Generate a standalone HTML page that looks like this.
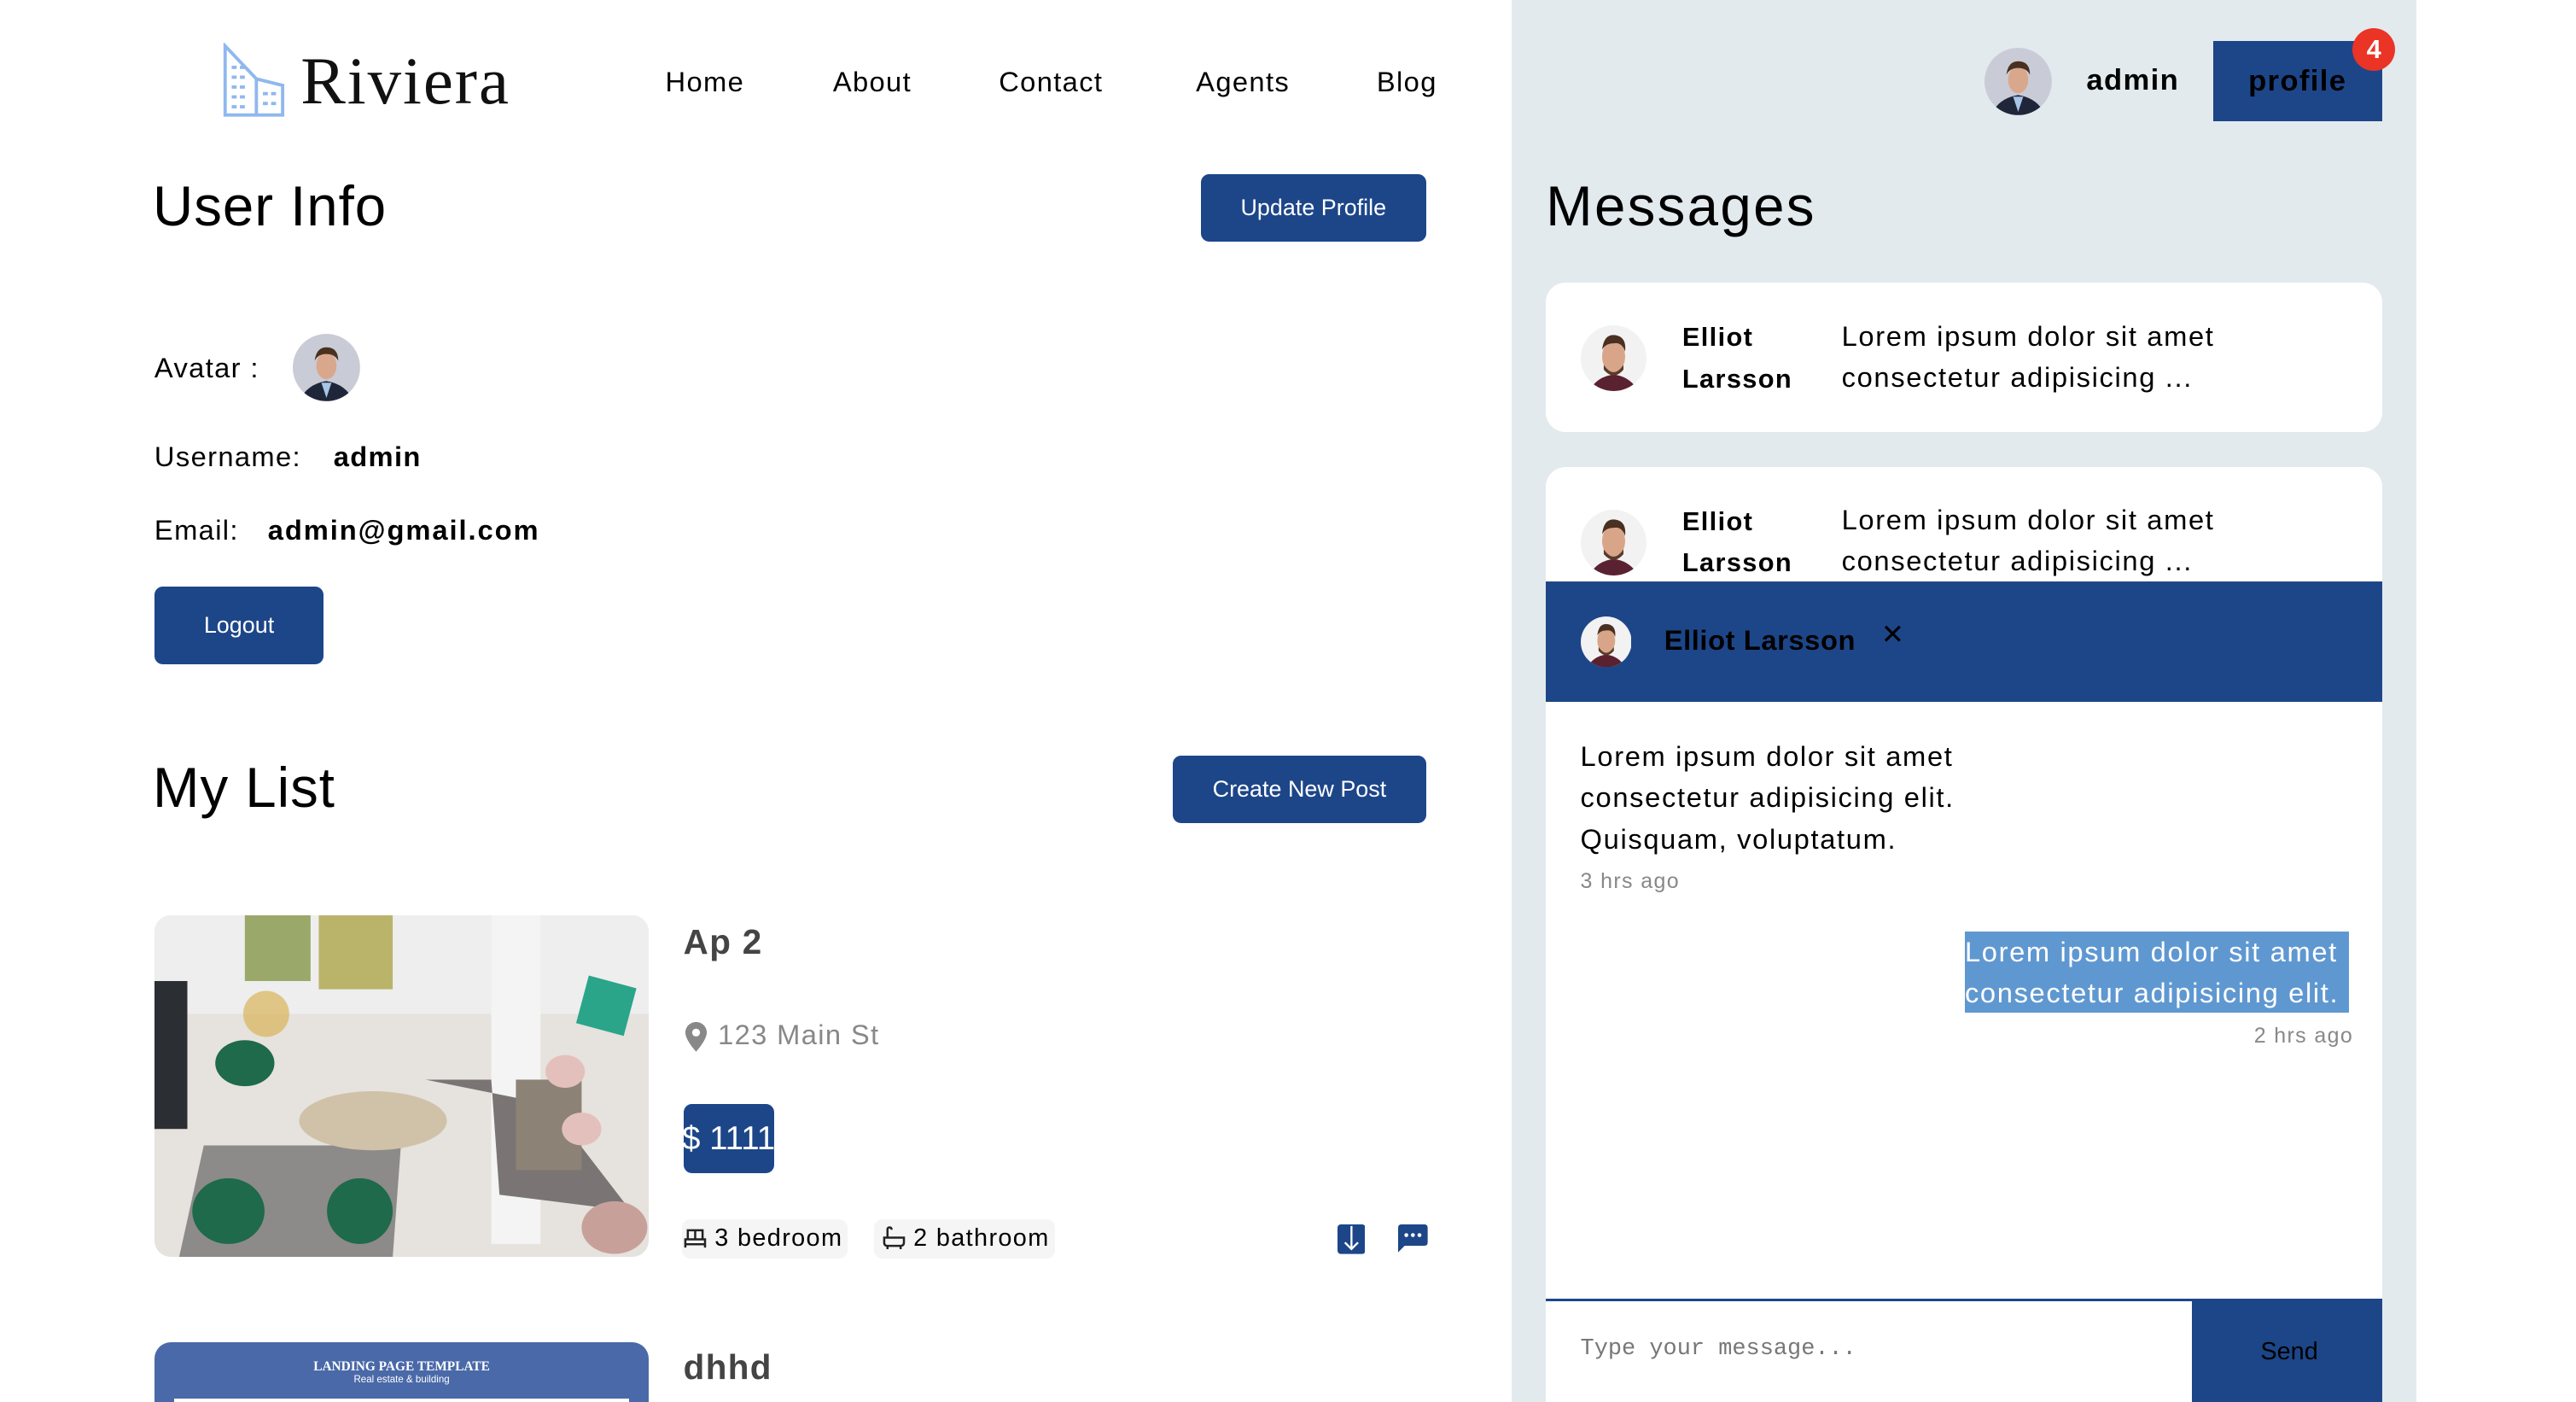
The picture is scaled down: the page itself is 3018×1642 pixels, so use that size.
<!DOCTYPE html>
<html><head><meta charset="utf-8"><style>
html,body{margin:0;padding:0;background:#fff;overflow:hidden;width:3018px;height:1642px}
#w{zoom:1.9247;width:1568px;height:853px;position:relative;font-family:"Liberation Sans",sans-serif;color:#000;letter-spacing:0.7px}
.a{position:absolute;white-space:nowrap}
.btn{position:absolute;background:#1d4689;color:#fff;border-radius:5px;font-size:14px;display:flex;align-items:center;justify-content:center;white-space:nowrap;letter-spacing:0}
.card{position:absolute;left:941px;width:509px;background:#fff;border-radius:12px}
.nm{font-weight:bold;font-size:16px;line-height:25px}
.ms{font-size:17px;line-height:25px;letter-spacing:0.85px}
h1{margin:0;font-weight:normal;font-size:34px;letter-spacing:0.5px}
</style></head><body><div id="w">
<div class="a" style="left:920px;top:0;width:551px;height:853px;background:#e2eaee"></div>

<svg class="a" style="left:134px;top:26px" width="42" height="46" viewBox="0 0 42 46"><path d="M3 2 L3 44 L38 44 L38 26 L22 22 Z" fill="none" stroke="#8fb8ee" stroke-width="2"/><path d="M22 22 L22 44" stroke="#8fb8ee" stroke-width="2"/><g fill="#8fb8ee"><rect x="7" y="14" width="3" height="2"/><rect x="12" y="14" width="3" height="2"/><rect x="7" y="20" width="3" height="2"/><rect x="12" y="20" width="3" height="2"/><rect x="7" y="26" width="3" height="2"/><rect x="12" y="26" width="3" height="2"/><rect x="7" y="32" width="3" height="2"/><rect x="12" y="32" width="3" height="2"/><rect x="7" y="38" width="3" height="2"/><rect x="12" y="38" width="3" height="2"/><rect x="26" y="30" width="3" height="2"/><rect x="31" y="30" width="3" height="2"/><rect x="26" y="36" width="3" height="2"/><rect x="31" y="36" width="3" height="2"/></g></svg>
<div class="a" style="left:183px;top:26px;font-family:'Liberation Serif',serif;font-size:41px;line-height:48px;color:#111;letter-spacing:1px">Riviera</div>

<div class="a" style="left:405px;top:40px;font-size:17px">Home</div>
<div class="a" style="left:507px;top:40px;font-size:17px">About</div>
<div class="a" style="left:608px;top:40px;font-size:17px">Contact</div>
<div class="a" style="left:728px;top:40px;font-size:17px">Agents</div>
<div class="a" style="left:838px;top:40px;font-size:17px">Blog</div>

<h1 class="a" style="left:93px;top:106px">User Info</h1>
<div class="btn" style="left:731px;top:106px;width:137px;height:41px">Update Profile</div>

<div class="a" style="left:94px;top:214px;font-size:17px">Avatar :</div>
<svg class="a" style="left:178px;top:203px" width="41" height="41" viewBox="0 0 40 40"><defs><clipPath id="c1"><circle cx="20" cy="20" r="20"/></clipPath></defs><g clip-path="url(#c1)"><rect width="40" height="40" fill="#c9ccd6"/><path d="M4 40 Q8 30 20 28 Q32 30 36 40Z" fill="#20263a"/><path d="M17 29 L20 38 L23 29Z" fill="#a8c4e6"/><ellipse cx="20" cy="19" rx="6" ry="8" fill="#d9a88c"/><path d="M13 16 Q14 8 20 8 Q27 8 27 16 Q25 12 20 12 Q15 12 13 16Z" fill="#4a3020"/></g></svg>
<div class="a" style="left:94px;top:268px;font-size:17px">Username:</div>
<div class="a" style="left:203px;top:268px;font-size:17px;font-weight:bold">admin</div>
<div class="a" style="left:94px;top:313px;font-size:17px">Email:</div>
<div class="a" style="left:163px;top:313px;font-size:17px;font-weight:bold;letter-spacing:1px">admin@gmail.com</div>
<div class="btn" style="left:94px;top:357px;width:103px;height:47px">Logout</div>

<h1 class="a" style="left:93px;top:460px">My List</h1>
<div class="btn" style="left:714px;top:460px;width:154px;height:41px">Create New Post</div>

<div class="a" style="left:94px;top:557px;width:301px;height:208px;border-radius:10px;overflow:hidden;background:#ece9e6">
<svg width="301" height="208" viewBox="0 0 301 208"><rect width="301" height="208" fill="#e6e2de"/><rect x="0" y="0" width="301" height="60" fill="#eeeeee"/><rect x="55" y="0" width="40" height="40" fill="#9aa86a"/><rect x="100" y="0" width="45" height="45" fill="#b9b46a"/><rect x="205" y="0" width="30" height="200" fill="#f4f4f4"/><polygon points="30,140 150,140 145,208 15,208" fill="#8d8a8a"/><polygon points="165,100 205,100 210,170 290,180 240,115" fill="#7a7474"/><ellipse cx="133" cy="125" rx="45" ry="18" fill="#cfc2a8"/><ellipse cx="45" cy="180" rx="22" ry="20" fill="#1e6a4a"/><ellipse cx="125" cy="180" rx="20" ry="20" fill="#1e6a4a"/><ellipse cx="55" cy="90" rx="18" ry="14" fill="#1e6a4a"/><rect x="220" y="100" width="40" height="55" fill="#8c8276"/><ellipse cx="250" cy="95" rx="12" ry="10" fill="#e4c0bd"/><ellipse cx="260" cy="130" rx="12" ry="10" fill="#e4c0bd"/><ellipse cx="280" cy="190" rx="20" ry="16" fill="#c8a09a"/><rect x="260" y="40" width="30" height="30" fill="#2aa58a" transform="rotate(15 275 55)"/><circle cx="68" cy="60" r="14" fill="#d9b35a" opacity=".7"/><rect x="0" y="40" width="20" height="90" fill="#2b2e32"/></svg></div>

<div class="a" style="left:416px;top:561px;font-size:21px;font-weight:bold;color:#444">Ap 2</div>
<svg class="a" style="left:417px;top:622px" width="13" height="18" viewBox="0 0 13 18"><path d="M6.5 0 C2.9 0 0 2.8 0 6.4 C0 11 6.5 18 6.5 18 C6.5 18 13 11 13 6.4 C13 2.8 10.1 0 6.5 0Z" fill="#888"/><circle cx="6.5" cy="6.4" r="2.4" fill="#fff"/></svg>
<div class="a" style="left:437px;top:620px;font-size:17px;color:#888">123 Main St</div>
<div class="btn" style="left:416px;top:672px;width:55px;height:42px;font-size:20px">$ 1111</div>
<div class="a" style="left:415px;top:742px;width:101px;height:24px;background:#f5f5f5;border-radius:5px"></div>
<div class="a" style="left:532px;top:742px;width:110px;height:24px;background:#f5f5f5;border-radius:5px"></div>
<svg class="a" style="left:416px;top:747px" width="14" height="13" viewBox="0 0 14 13"><path d="M1 12V7H13V12M1 10H13M2.5 7V1.5H11.5V7M7 1.5V7" fill="none" stroke="#222" stroke-width="1.3"/></svg>
<div class="a" style="left:435px;top:745px;font-size:15px">3 bedroom</div>
<svg class="a" style="left:537px;top:746px" width="14" height="14" viewBox="0 0 14 14"><path d="M1 7H13V10Q13 12 11 12H3Q1 12 1 10ZM3 12V14M11 12V14M3 7V2Q3 0.8 4.2 0.8Q5.5 0.8 5.5 2.2" fill="none" stroke="#222" stroke-width="1.3"/></svg>
<div class="a" style="left:556px;top:745px;font-size:15px">2 bathroom</div>
<svg class="a" style="left:814px;top:745px" width="17" height="18" viewBox="0 0 17 18"><rect width="17" height="18" rx="2" fill="#1d4689"/><path d="M8.5 1V15M4.5 11L8.5 15L12.5 11" fill="none" stroke="#fff" stroke-width="1.2"/></svg>
<svg class="a" style="left:851px;top:745px" width="18" height="18" viewBox="0 0 18 18"><path d="M2 0H16Q18 0 18 2V11Q18 13 16 13H4L0 17V2Q0 0 2 0Z" fill="#1d4689"/><circle cx="5" cy="6.5" r="1.2" fill="#fff"/><circle cx="9" cy="6.5" r="1.2" fill="#fff"/><circle cx="13" cy="6.5" r="1.2" fill="#fff"/></svg>

<div class="a" style="left:94px;top:817px;width:301px;height:50px;border-radius:10px 10px 0 0;background:#4a69a8;overflow:hidden;letter-spacing:0">
<div style="text-align:center;color:#fff;font-family:'Liberation Serif',serif;font-weight:bold;font-size:8px;margin-top:10px">LANDING PAGE TEMPLATE</div>
<div style="text-align:center;color:#fff;font-size:6px">Real estate &amp; building</div>
<div style="position:absolute;left:12px;right:12px;top:34px;height:20px;background:#fff"></div></div>
<div class="a" style="left:416px;top:820px;font-size:21px;font-weight:bold;color:#444">dhhd</div>

<svg class="a" style="left:1208px;top:29px" width="41" height="41" viewBox="0 0 40 40"><defs><clipPath id="c2"><circle cx="20" cy="20" r="20"/></clipPath></defs><g clip-path="url(#c2)"><rect width="40" height="40" fill="#c9ccd6"/><path d="M4 40 Q8 30 20 28 Q32 30 36 40Z" fill="#20263a"/><path d="M17 29 L20 38 L23 29Z" fill="#a8c4e6"/><ellipse cx="20" cy="19" rx="6" ry="8" fill="#d9a88c"/><path d="M13 16 Q14 8 20 8 Q27 8 27 16 Q25 12 20 12 Q15 12 13 16Z" fill="#4a3020"/></g></svg>
<div class="a" style="left:1270px;top:39px;font-size:18px;font-weight:bold">admin</div>
<div class="a" style="left:1347px;top:25px;width:103px;height:49px;background:#1d4689;display:flex;align-items:center;justify-content:center;font-weight:bold;font-size:18px;color:#000">profile</div>
<div class="a" style="left:1432px;top:17px;width:26px;height:26px;border-radius:50%;background:#ea3426;color:#fff;font-weight:bold;font-size:16px;text-align:center;line-height:26px;letter-spacing:0">4</div>

<h1 class="a" style="left:941px;top:106px;letter-spacing:1.2px">Messages</h1>

<div class="card" style="top:172px;height:91px"></div>
<svg class="a" style="left:962px;top:198px" width="40" height="40" viewBox="0 0 40 40"><defs><clipPath id="c3"><circle cx="20" cy="20" r="20"/></clipPath></defs><g clip-path="url(#c3)"><rect width="40" height="40" fill="#f2f2f2"/><path d="M5 40 Q10 31 20 30 Q30 31 35 40Z" fill="#5a2230"/><ellipse cx="20" cy="19" rx="7" ry="10" fill="#d8a589"/><path d="M14 24 Q20 33 26 24 L26 27 Q20 34 14 27Z" fill="#5a3a2a"/><path d="M13 15 Q14 5 21 6 Q28 7 27 16 Q25 10 20 11 Q15 11 13 15Z" fill="#4a3020"/></g></svg>
<div class="a nm" style="left:1024px;top:193px">Elliot<br>Larsson</div>
<div class="a ms" style="left:1121px;top:192px">Lorem ipsum dolor sit amet<br>consectetur adipisicing ...</div>

<div class="card" style="top:284px;height:100px"></div>
<svg class="a" style="left:962px;top:310px" width="40" height="40" viewBox="0 0 40 40"><defs><clipPath id="c4"><circle cx="20" cy="20" r="20"/></clipPath></defs><g clip-path="url(#c4)"><rect width="40" height="40" fill="#f2f2f2"/><path d="M5 40 Q10 31 20 30 Q30 31 35 40Z" fill="#5a2230"/><ellipse cx="20" cy="19" rx="7" ry="10" fill="#d8a589"/><path d="M14 24 Q20 33 26 24 L26 27 Q20 34 14 27Z" fill="#5a3a2a"/><path d="M13 15 Q14 5 21 6 Q28 7 27 16 Q25 10 20 11 Q15 11 13 15Z" fill="#4a3020"/></g></svg>
<div class="a nm" style="left:1024px;top:305px">Elliot<br>Larsson</div>
<div class="a ms" style="left:1121px;top:304px">Lorem ipsum dolor sit amet<br>consectetur adipisicing ...</div>

<div class="a" style="left:941px;top:354px;width:509px;height:73px;background:#1d4689"></div>
<svg class="a" style="left:962px;top:375px" width="31" height="31" viewBox="0 0 40 40"><defs><clipPath id="c5"><circle cx="20" cy="20" r="20"/></clipPath></defs><g clip-path="url(#c5)"><rect width="40" height="40" fill="#f2f2f2"/><path d="M5 40 Q10 31 20 30 Q30 31 35 40Z" fill="#5a2230"/><ellipse cx="20" cy="19" rx="7" ry="10" fill="#d8a589"/><path d="M14 24 Q20 33 26 24 L26 27 Q20 34 14 27Z" fill="#5a3a2a"/><path d="M13 15 Q14 5 21 6 Q28 7 27 16 Q25 10 20 11 Q15 11 13 15Z" fill="#4a3020"/></g></svg>
<div class="a" style="left:1013px;top:380px;font-size:17px;font-weight:bold;color:#000;letter-spacing:0.3px">Elliot Larsson</div>
<div class="a" style="left:1145px;top:376px;font-size:17px;color:#000">✕</div>
<div class="a" style="left:941px;top:427px;width:509px;height:364px;background:#fff"></div>
<div class="a ms" style="left:962px;top:448px">Lorem ipsum dolor sit amet<br>consectetur adipisicing elit.<br>Quisquam, voluptatum.</div>
<div class="a" style="left:962px;top:529px;font-size:13px;color:#888">3 hrs ago</div>
<div class="a ms" style="left:1196px;top:567px;width:234px;height:49px;background:#5f98d1;color:#fff">Lorem ipsum dolor sit amet<br>consectetur adipisicing elit.</div>
<div class="a" style="left:1372px;top:623px;font-size:13px;color:#888">2 hrs ago</div>
<div class="a" style="left:941px;top:790px;width:509px;height:2px;background:#1d4689"></div>
<div class="a" style="left:941px;top:792px;width:393px;height:61px;background:#fff"></div>
<div class="a" style="left:962px;top:813px;font-family:'Liberation Mono',monospace;font-size:14px;color:#777;letter-spacing:0">Type your message...</div>
<div class="a" style="left:1334px;top:792px;width:116px;height:61px;background:#1d4689"></div>
<div class="a" style="left:1376px;top:814px;font-size:15px;color:#000;letter-spacing:0">Send</div>
</div></body></html>
